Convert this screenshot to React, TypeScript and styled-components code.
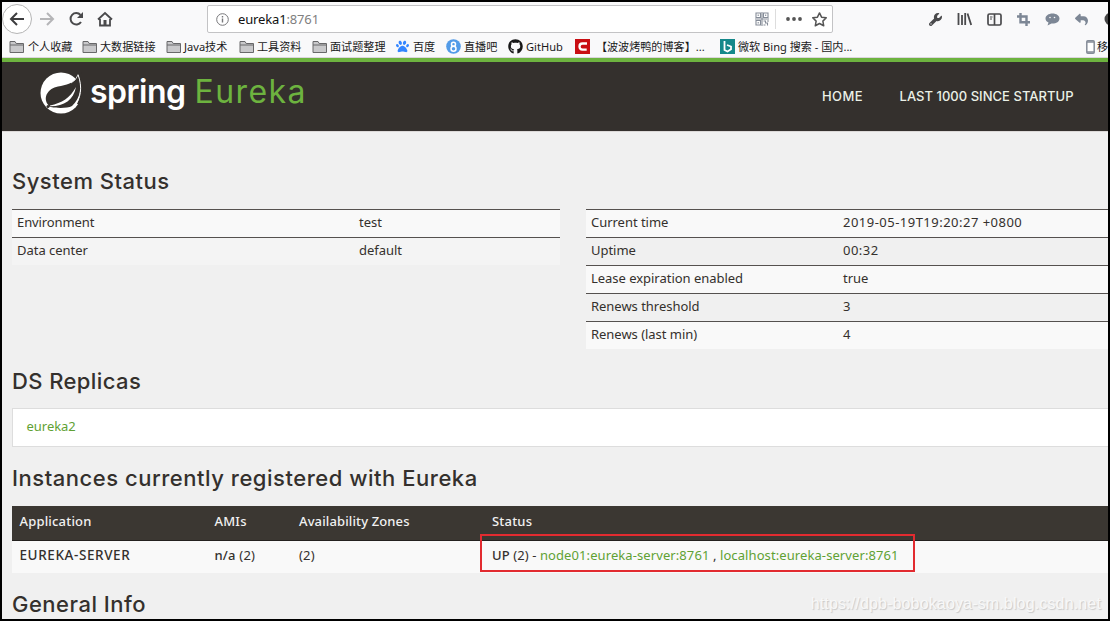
import React from 'react';
import styled, { createGlobalStyle } from 'styled-components';
import { FaWrench, FaGithub, FaReply, FaPaw } from 'react-icons/fa6';

const Global = createGlobalStyle`
  * { box-sizing: border-box; }
  html, body { margin: 0; background: #fff; overflow: hidden; }
`;
const body = `"Noto Sans", "Open Sans", sans-serif`;
const display = `Inter, "Noto Sans", sans-serif`;
const cjk = `"Noto Sans", "Noto Sans CJK SC", sans-serif`;

const Frame = styled.div`
  position: relative; width: 1110px; height: 621px; overflow: hidden;
  border: 2px solid #000; background: #f0f0f0; color: #34302d;
  font: 13px/18px ${body};
`;
const Chrome = styled.div`
  height: 56px; background: #f9f9fa; border-bottom: 1px solid #dcd6dc; overflow: hidden;
`;
const Toolbar = styled.div`
  display: flex; align-items: center; height: 34px; width: 1160px;
`;
const Back = styled.div`
  width: 30px; height: 30px; border: 1px solid #b5b5b5; border-radius: 50%; background: #fff;
  display: grid; place-items: center; flex: none;
`;
const NavIcons = styled.div`
  display: flex; align-items: center; width: 175px; gap: 13px; padding-left: 7px;
`;
const UrlBar = styled.div`
  width: 626px; height: 28px; border: 1px solid #c3c3c5; background: #fff; border-radius: 2px;
  display: flex; align-items: center; padding: 0 5px 0 8px; font-size: 13px; letter-spacing: -0.15px; color: #808080;
`;
const Host = styled.span`color: #111; margin-left: 9px;`;
const Divider = styled.span`width: 1px; height: 20px; background: #ddd; margin: 0 10px 0 6px;`;
const StarIcon = styled.svg`margin-left: 10px;`;
const Spacer = styled.span`flex: 1;`;
const Tools = styled.div`
  display: flex; align-items: center; padding-left: 96px; gap: 15px; color: #7d8795; flex: none;
  svg { flex: none; }
`;
const Bookmarks = styled.div`
  display: flex; height: 21px; align-items: center; padding-left: 7px; width: 1160px;
`;
const Bookmark = styled.div<{ $w: number; $gap?: number }>`
  display: flex; align-items: center; width: ${p => p.$w}px; gap: ${p => p.$gap ?? 3}px; flex: none;
  font: 11.1px/18px ${cjk}; color: #1a1a1a; white-space: nowrap;
  svg { flex: none; }
`;
const Header = styled.header`
  height: 74px; background: #34302d; border-top: 4px solid #6db33f; border-bottom: 1px solid #dcd9d8;
  display: flex; padding-left: 38px;
`;
const Brand = styled.div`
  display: flex; width: 782px; padding-top: 10px;
`;
const Word = styled.span<{ $green?: boolean; $ls: number }>`
  font: ${p => (p.$green ? '400 32px' : '600 32px')}/40px ${display};
  color: ${p => (p.$green ? '#6db33f' : '#fff')}; letter-spacing: ${p => p.$ls}px;
  margin-left: ${p => (p.$green ? 9 : 7)}px;
`;
const NavLink = styled.a<{ $w: number; $ls: number }>`
  width: ${p => p.$w}px; flex: none; font: 500 13px/18px ${display}; color: #ebf1e7; padding-top: 25px;
  letter-spacing: ${p => p.$ls}px; white-space: nowrap;
`;
const Main = styled.main`
  width: 1140px; padding: 33px 0 0 10px;
`;
const Heading = styled.h1<{ $ls: number; $mb: number }>`
  margin: 0 0 ${p => p.$mb}px; font: 500 22px/32px ${display}; letter-spacing: ${p => p.$ls}px; color: #34302d;
`;
const StatusGrid = styled.div`
  display: grid; grid-template-columns: 547.5px 548px; gap: 26.5px; height: 156px; align-items: start;
`;
const StatusRow = styled.div<{ $c: number; $bg: string }>`
  display: grid; grid-template-columns: ${p => p.$c}px 1fr; height: 28px; padding: 3px 0 0 5px;
  border-top: 1px solid #55514f; background: ${p => p.$bg};
`;
const T = styled.span<{ $ls?: number }>`
  letter-spacing: ${p => p.$ls ?? -0.03}px; white-space: nowrap;
`;
const AppName = styled.b`font-size: 13.5px; letter-spacing: .6px;`;
const Panel = styled.div`
  height: 39px; border: 1px solid #ddd; background: #fff; padding: 8px 13.5px; color: #5fa134; margin-bottom: 15px;
`;
const Row = styled.div<{ $head?: boolean }>`
  display: grid; grid-template-columns: 195px 84.5px 193px 1fr; padding-left: 7.5px; align-items: center;
  height: ${p => (p.$head ? 35 : 32)}px; background: ${p => (p.$head ? '#3b3732' : '#f9f9f9')};
  color: ${p => (p.$head ? '#f1f1f1' : '#34302d')}; font-weight: ${p => (p.$head ? 500 : 400)};
  padding-bottom: 4px;
  border-bottom: ${p => (p.$head ? '1px solid #24211f' : '0')};
  b { font-weight: 500; }
`;
const Link = styled.a`color: #5fa134;`;
const LastSection = styled.section`padding-top: 15px;`;
const RedBox = styled.div`
  position: absolute; left: 478px; top: 532px; width: 435px; height: 38px; border: 2px solid #e22b30;
`;
const Watermark = styled.div`
  position: absolute; right: 7px; bottom: 5px; font: 16px/20px "Liberation Sans", sans-serif;
  color: #f8f8f8; text-shadow: 1px 1px 1px #c8c8c8; letter-spacing: .15px;
`;

const Folder = () => (
  <svg width="16" height="14" viewBox="0 0 16 14"><path d="M1 12.5V1.5h5l1.2 2H14.5v9z" fill="#c9c9cb" stroke="#68686a" /><path d="M1 5h13.5" stroke="#68686a" /></svg>
);
const Leaf = () => (
  <svg width="43" height="42" viewBox="0 0 43 42">
    <circle cx="21" cy="21" r="20.5" fill="#fff" />
    <path d="M35.500 4L43 0V33L37 32C41 24 41 14 38 4L35 8Z" fill="#34302d" />
    <path d="M38 3C34 12 26 13 18 14.500C8 16.500 3 25 7.500 32L9.500 34.800C17 36.500 27 36.500 32 34C41 26 42 14 38 3Z" fill="#34302d" />
    <path d="M38 2.500C42.500 15 41.500 27 33 35" fill="none" stroke="#fff" strokeWidth="1" />
    <path d="M38 3Q35.500 9 31 11" stroke="#fff" strokeWidth=".8" fill="none" />
    <path d="M10 33.500C22 31 30 26 36 15C33.500 28 24 34.500 10 34.300Z" fill="#fff" />
    <circle cx="8" cy="34.500" r="1.500" fill="#34302d" />
  </svg>
);

const left = [['Environment', 'test'], ['Data center', 'default']];
const right = [
  ['Current time', '2019-05-19T19:20:27 +0800'], ['Uptime', '00:32'],
  ['Lease expiration enabled', 'true'], ['Renews threshold', '3'], ['Renews (last min)', '4'],
];

export default function App() {
  return (
    <Frame>
      <Global />
      <Chrome>
        <Toolbar>
          <Back><svg width="16" height="14" viewBox="0 0 16 14" fill="none" stroke="#3d3d3f" strokeWidth="2"><path d="M15 7H2M8 1L2 7l6 6" /></svg></Back>
          <NavIcons>
            <svg width="16" height="14" viewBox="0 0 16 14" fill="none" stroke="#b5b5b7" strokeWidth="2"><path d="M1 7h13M8 1l6 6-6 6" /></svg>
            <svg width="16" height="16" viewBox="0 0 16 16" fill="none" stroke="#4a4a4c" strokeWidth="2"><path d="M13 11A5.7 5.7 0 1 1 12.5 4" /><path d="M15 1v6H9z" fill="#4a4a4c" stroke="none" /></svg>
            <svg width="16" height="16" viewBox="0 0 16 16" fill="none" stroke="#4a4a4c" strokeWidth="1.8"><path d="M1 8.5L8 2l7 6.500M3 8v6.500h10V8" /><path d="M8 14V9" strokeWidth="3" /></svg>
          </NavIcons>
          <UrlBar>
            <svg width="13" height="13" viewBox="0 0 13 13" fill="none" stroke="#77777a"><circle cx="6.5" cy="6.5" r="5.8" /><path d="M6.5 5.500v4M6.500 3v1.400" strokeWidth="1.4" /></svg>
            <Host>eureka1</Host>:8761
            <Spacer />
            <svg width="14" height="14" viewBox="0 0 14 14" fill="none" stroke="#858c98" strokeWidth="1.100"><path d="M1 1h4.500v4.500H1zM8.500 1H13v4.500H8.500zM1 8.500h4.500V13H1zM3.200 2.500V4M10.700 2.500V4M3.200 10v1.500M7 0v14M0 7h14M8.500 9h2v2h2v2.500M12 9h2M8.500 13h2" /></svg>
            <Divider />
            <svg width="16" height="4" viewBox="0 0 16 4" fill="#555"><circle cx="2" cy="2" r="1.900" /><circle cx="8" cy="2" r="1.900" /><circle cx="14" cy="2" r="1.900" /></svg>
            <StarIcon width="15" height="15" viewBox="0 0 16 16" fill="none" stroke="#555" strokeWidth="1.600" strokeLinejoin="round"><path d="M8 1l2.200 4.500 5 .7-3.600 3.500.9 5L8 12.300l-4.500 2.400.9-5L.8 6.200l5-.7z" /></StarIcon>
          </UrlBar>
          <Tools>
            <FaWrench size={13} color="#4a4a4c" />
            <svg width="15" height="14" viewBox="0 0 15 14" stroke="#4a4a4c" strokeWidth="1.800"><path d="M1.500 1v12M5 3v10M8.200 1v12M10.500 1.500l3.700 11.500" /></svg>
            <svg width="15" height="13" viewBox="0 0 15 13" fill="none" stroke="#4a4a4c" strokeWidth="1.700"><rect x="1" y="1" width="13" height="11" rx="1.500" /><path d="M7.500 1v11" /><path d="M3 4h2.500M3 6h2" strokeWidth="1" /></svg>
            <svg width="13" height="13" viewBox="0 0 13 13" fill="none" stroke="#7d8795" strokeWidth="2.400"><path d="M3.500 0v9.300H13M0 3.500h9.500V13" /></svg>
            <svg width="15" height="13" viewBox="0 0 15 13" fill="#7d8795"><path d="M7.500.5C3.500.5.5 2.700.5 5.500c0 1.800 1.200 3.200 3 4.100L2.500 12.500l4-2C11 10.800 14.500 8.700 14.500 5.500c0-2.800-3-5-7-5z" /><g fill="#f9f9fa"><circle cx="5" cy="4.500" r=".8" /><circle cx="9.500" cy="4.500" r=".8" /></g></svg>
            <FaReply size={13} />
            <svg width="14" height="14"><circle cx="8" cy="7" r="6.500" fill="#444" /></svg>
          </Tools>
        </Toolbar>
        <Bookmarks>
          <Bookmark $w={73}><Folder />个人收藏</Bookmark>
          <Bookmark $w={84} $gap={2}><Folder />大数据链接</Bookmark>
          <Bookmark $w={73} $gap={2}><Folder />Java技术</Bookmark>
          <Bookmark $w={73} $gap={2}><Folder />工具资料</Bookmark>
          <Bookmark $w={84} $gap={2}><Folder />面试题整理</Bookmark>
          <Bookmark $w={50} $gap={4}><FaPaw size={13} color="#3385ff" />百度</Bookmark>
          <Bookmark $w={62}><svg width="15" height="15" viewBox="0 0 15 15"><circle cx="7.500" cy="7.500" r="7.300" fill="#529be8" /><g fill="none" stroke="#fff" strokeWidth="1.500"><circle cx="7.500" cy="5.200" r="2" /><circle cx="7.500" cy="9.800" r="2.500" /></g></svg>直播吧</Bookmark>
          <Bookmark $w={67}><FaGithub size={15} color="#181818" />GitHub</Bookmark>
          <Bookmark $w={145}><svg width="15" height="15" viewBox="0 0 15 15"><path fill="#c90e13" d="M0 0h15v15H0z" /><path d="M12 4.500H7.500Q4.500 4.500 4.500 7.500T7.500 10.700h4.200" fill="none" stroke="#fff" strokeWidth="2.300" /></svg>&nbsp;【波波烤鸭的博客】...</Bookmark>
          <Bookmark $w={366}><svg width="15" height="15" viewBox="0 0 15 15"><path fill="#15888a" d="M0 0h15v15H0z" /><path d="M4.500 2v9l3 1.500 3.500-2.300V7.500L7 6" fill="none" stroke="#fff" strokeWidth="1.800" /></svg>微软 Bing 搜索 - 国内...</Bookmark>
          <Bookmark $w={40} $gap={2}><svg width="9" height="14" viewBox="0 0 9 14"><rect x=".8" y=".8" width="7.400" height="12.400" rx="1" fill="#fff" stroke="#858c98" strokeWidth="1.500" /><path d="M1 2h7M1 12h7" stroke="#858c98" strokeWidth="1.500" /></svg>移</Bookmark>
        </Bookmarks>
      </Chrome>
      <Header>
        <Brand><Leaf /><Word $ls={-0.5}>spring</Word><Word $green $ls={1.4}>Eureka</Word></Brand>
        <NavLink $w={77.5} $ls={0.4}>HOME</NavLink>
        <NavLink $w={190} $ls={0.03}>LAST 1000 SINCE STARTUP</NavLink>
      </Header>
      <Main>
        <Heading $ls={0.5} $mb={12}>System Status</Heading>
        <StatusGrid>
          <div>{left.map(([k, v], i) => <StatusRow key={k} $c={342} $bg={i ? '#f4f4f4' : '#f9f9f9'}><T $ls={i ? -0.03 : -0.1}>{k}</T><T>{v}</T></StatusRow>)}</div>
          <div>{right.map(([k, v], i) => <StatusRow key={k} $c={252} $bg={i % 2 ? '#f0f0f0' : '#f9f9f9'}><T>{k}</T><T $ls={/\d/.test(v) ? 0.48 : 0}>{v}</T></StatusRow>)}</div>
        </StatusGrid>
        <Heading $ls={0.4} $mb={11}>DS Replicas</Heading>
        <Panel><T $ls={-0.03}>eureka2</T></Panel>
        <Heading $ls={0.52} $mb={12}>Instances currently registered with Eureka</Heading>
        <Row $head><T $ls={0.18}>Application</T><T $ls={0.2}>AMIs</T><T $ls={0.12}>Availability Zones</T><T $ls={0.2}>Status</T></Row>
        <Row><AppName>EUREKA-SERVER</AppName><T $ls={0.2}><b>n/a</b> (2)</T><T $ls={0.2}>(2)</T><T $ls={0.09}><b>UP</b> (2) - <Link>node01:eureka-server:8761</Link> , <Link>localhost:eureka-server:8761</Link></T></Row>
        <LastSection><Heading $ls={0.5} $mb={0}>General Info</Heading></LastSection>
      </Main>
      <RedBox />
      <Watermark>https://dpb-bobokaoya-sm.blog.csdn.net</Watermark>
    </Frame>
  );
}
